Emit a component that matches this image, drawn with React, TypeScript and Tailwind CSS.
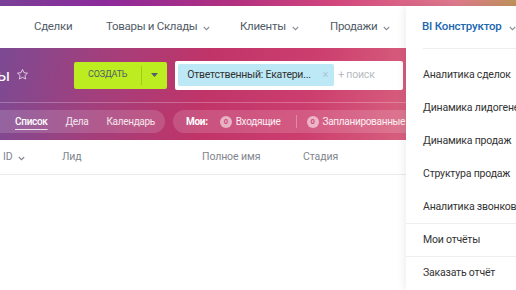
import React from 'react';

const navItems = [
  { label: 'Сделки', caret: false, w: 'w-[72px]' },
  { label: 'Товары и Склады', caret: true, w: 'w-[134px]' },
  { label: 'Клиенты', caret: true, w: 'w-[90px]' },
  { label: 'Продажи', caret: true, w: 'w-[76px]' },
];

const menuTop = ['Аналитика сделок', 'Динамика лидогенерации', 'Динамика продаж', 'Структура продаж', 'Аналитика звонков'];

function Caret({ className = '' }: { className?: string }) {
  return (
    <svg width="7" height="5" viewBox="0 0 7 5" className={className}>
      <path d="M.8 1l2.7 2.7L6.2 1" fill="none" stroke="currentColor" strokeWidth="1.1" />
    </svg>
  );
}

function Badge() {
  return (
    <span className="w-[12px] h-[12px] rounded-full bg-white/55 text-[#cf4a78] text-[7.5px] font-bold flex items-center justify-center">0</span>
  );
}

export default function App() {
  return (
    <div className="relative w-[516px] h-[290px] overflow-hidden bg-white font-['Roboto',sans-serif]">
      {/* top strip */}
      <div className="h-[6px] bg-[linear-gradient(90deg,#7a4097_0%,#8c2a9b_20%,#b2307f_45%,#d2467c_65%,#df7a8e_88%,#c0935c_100%)]" />

      {/* nav */}
      <nav className="h-[42px] flex items-center pl-[34px] text-[11.5px] tracking-[-0.3px] text-[#525c69] whitespace-nowrap">
        {navItems.map(n => (
          <div key={n.label} className={`${n.w} flex items-center gap-[6px] shrink-0`}>
            <span>{n.label}</span>
            {n.caret && <Caret className="mt-[2px] text-[#8a9099]" />}
          </div>
        ))}
      </nav>

      {/* gradient toolbar */}
      <section className="h-[92px] bg-[linear-gradient(100deg,#7c4a93_0%,#a0407e_18%,#c03468_40%,#cc3e6e_60%,#d8617f_80%,#dc7a8c_100%)]">
        <div className="h-[55px] flex items-center border-b border-white/25">
          <span className="ml-[-3px] text-[17px] text-white leading-none">ы</span>
          <svg width="13" height="13" viewBox="0 0 24 24" className="ml-[6px] mb-[1px] text-white/80">
            <path d="M12 2.8l2.8 5.9 6.4.8-4.7 4.4 1.2 6.4L12 17.2l-5.7 3.1 1.2-6.4-4.7-4.4 6.4-.8z" fill="none" stroke="currentColor" strokeWidth="1.6" strokeLinejoin="round" />
          </svg>
          <div className="ml-[45px] w-[93px] h-[27px] flex items-center bg-[#bbed21] rounded-[2px] text-[#535c69]">
            <span className="w-[67px] text-center text-[9px] tracking-[-0.2px]">СОЗДАТЬ</span>
            <span className="h-[19px] w-px bg-[#a3c71c]" />
            <svg width="7" height="4" viewBox="0 0 7 4" className="ml-[9px]"><path d="M0 0h7L3.5 4z" fill="#535c69" /></svg>
          </div>
          <div className="ml-[8px] w-[228px] h-[29px] flex items-center bg-white rounded-[2px] pl-[3px] whitespace-nowrap">
            <div className="w-[156px] h-[22px] flex items-center bg-[#bde8f5] rounded-[2px] pl-[9px] text-[10.5px] tracking-[-0.25px] text-[#333]">
              <span>Ответственный: Екатери...</span>
              <span className="ml-auto mr-[6px] text-[11px] text-[#a9c6d2]">×</span>
            </div>
            <span className="ml-[4px] text-[10.5px] tracking-[-0.2px] text-[#b6bbc1]">+ поиск</span>
          </div>
        </div>
        <div className="h-[37px] flex items-center text-[10px] tracking-[-0.3px] text-white whitespace-nowrap">
          <div className="ml-[-20px] h-[23px] flex items-center gap-[18px] pl-[35px] pr-[10px] rounded-full bg-white/15">
            <span className="underline underline-offset-[4px] decoration-white/80 font-medium">Список</span>
            <span className="text-white/85">Дела</span>
            <span className="text-white/85">Календарь</span>
          </div>
          <div className="ml-[8px] h-[23px] flex items-center pl-[13px] pr-[10px] rounded-full bg-white/15">
            <span className="font-bold">Мои:</span>
            <span className="ml-[12px]"><Badge /></span>
            <span className="ml-[4px] text-white/90">Входящие</span>
            <span className="ml-[15px] h-[13px] w-px bg-white/30" />
            <span className="ml-[10px]"><Badge /></span>
            <span className="ml-[4px] text-white/90">Запланированные</span>
          </div>
        </div>
      </section>

      {/* table header */}
      <div className="h-[35px] flex items-center border-b border-[#e9ebee] text-[10.5px] tracking-[-0.1px] text-[#80868e]">
        <div className="w-[62px] pl-[3px] flex items-center gap-[5px]">
          <span>ID</span>
          <Caret className="mt-[2px]" />
        </div>
        <div className="w-[140px]">Лид</div>
        <div className="w-[101px]">Полное имя</div>
        <div>Стадия</div>
      </div>

      {/* BI dropdown */}
      <div className="absolute top-[6px] left-[406px] bottom-0 w-[120px] bg-white shadow-[-2px_0_8px_rgba(0,0,0,0.07)] whitespace-nowrap">
        <div className="h-[42px] flex items-center gap-[7px] pl-[16px] text-[11.5px] tracking-[-0.2px] font-medium text-[#2067b0]">
          <span>BI Конструктор</span>
          <Caret className="mt-[2px] text-[#8a9099]" />
        </div>
        <div className="ml-[17px] border-t border-[#eceef0] pt-[9px] text-[10.5px] tracking-[-0.2px] text-[#333]">
          {menuTop.map(m => (
            <div key={m} className="h-[33px] flex items-center">{m}</div>
          ))}
        </div>
        <div className="border-t border-[#eceef0]" />
        <div className="h-[32px] flex items-center pl-[17px] text-[10.5px] tracking-[-0.2px] text-[#333]">Мои отчёты</div>
        <div className="border-t border-[#eceef0]" />
        <div className="h-[32px] flex items-center pl-[17px] text-[10.5px] tracking-[-0.2px] text-[#333]">Заказать отчёт</div>
      </div>
    </div>
  );
}
